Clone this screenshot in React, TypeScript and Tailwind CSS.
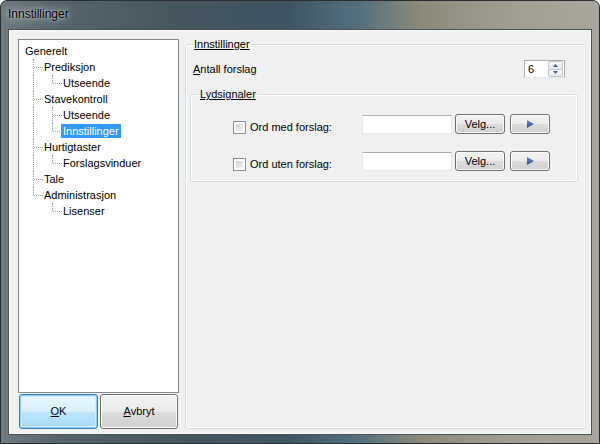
type Row = {
  label: string
  depth: number
  guides: number[]
  elbow?: { x: number; last: boolean }
  selected?: boolean
}

const rows: Row[] = [
  { label: 'Generelt', depth: 0, guides: [] },
  { label: 'Prediksjon', depth: 1, guides: [], elbow: { x: 14, last: false } },
  { label: 'Utseende', depth: 2, guides: [14], elbow: { x: 33, last: true } },
  { label: 'Stavekontroll', depth: 1, guides: [], elbow: { x: 14, last: false } },
  { label: 'Utseende', depth: 2, guides: [14], elbow: { x: 33, last: false } },
  { label: 'Innstillinger', depth: 2, guides: [14], elbow: { x: 33, last: true }, selected: true },
  { label: 'Hurtigtaster', depth: 1, guides: [], elbow: { x: 14, last: false } },
  { label: 'Forslagsvinduer', depth: 2, guides: [14], elbow: { x: 33, last: true } },
  { label: 'Tale', depth: 1, guides: [], elbow: { x: 14, last: false } },
  { label: 'Administrasjon', depth: 1, guides: [], elbow: { x: 14, last: true } },
  { label: 'Lisenser', depth: 2, guides: [], elbow: { x: 33, last: true } },
]

// tree connector lines are decoration on top of each row, so they sit absolute in the row
function TreeRow({ row }: { row: Row }) {
  return (
    <div className="relative flex h-[16px] items-center" style={{ paddingLeft: 4 + 19 * row.depth }}>
      {row.guides.map((x) => (
        <span key={x} className="absolute top-0 h-full w-0 border-l border-dotted border-[#a0a0a0]" style={{ left: x }} />
      ))}
      {row.elbow && (
        <>
          <span
            className="absolute top-0 w-0 border-l border-dotted border-[#a0a0a0]"
            style={{ left: row.elbow.x, height: row.elbow.last ? 8 : 16 }}
          />
          <span className="absolute top-[8px] h-0 w-[9px] border-t border-dotted border-[#a0a0a0]" style={{ left: row.elbow.x + 1 }} />
        </>
      )}
      <span
        className={
          row.selected
            ? 'h-[14px] bg-[#3399ff] px-[2px] leading-[14px] text-white'
            : 'h-[14px] px-[2px] leading-[14px] text-black'
        }
      >
        {row.label}
      </span>
    </div>
  )
}

function Checkbox() {
  return (
    <span className="flex h-[13px] w-[13px] shrink-0 border border-[#8e8f8f] bg-white p-[2px]">
      <span className="flex-1 bg-[linear-gradient(135deg,#cbcfd5,#f7f7f7)]" />
    </span>
  )
}

function Btn({ children, className = '' }: { children: React.ReactNode; className?: string }) {
  return (
    <div
      className={
        'flex h-[20px] items-center justify-center rounded-[3px] border border-[#707070] bg-[linear-gradient(180deg,#f2f2f2_0%,#ebebeb_50%,#dddddd_51%,#cfcfcf_100%)] shadow-[inset_0_0_0_1px_#fcfcfc] ' +
        className
      }
    >
      {children}
    </div>
  )
}

function SoundRow({ label }: { label: string }) {
  return (
    <div className="flex items-center">
      <div className="ml-[42px] mt-[6px] flex w-[129px] items-center gap-[4px]">
        <Checkbox />
        <span className="leading-[14px]">{label}</span>
      </div>
      <div className="h-[19px] w-[90px] border border-[#e3e9ef] border-t-[#abadb3] bg-white" />
      <Btn className="ml-[3px] w-[50px]">Velg...</Btn>
      <Btn className="ml-[5px] w-[40px]">
        <svg width="8" height="8" viewBox="0 0 8 8">
          <defs>
            <linearGradient id="pl" x1="0" y1="0" x2="0" y2="1">
              <stop offset="0" stopColor="#6d8ccc" />
              <stop offset="1" stopColor="#2c4c94" />
            </linearGradient>
          </defs>
          <path d="M1 0 L8 4 L1 8 Z" fill="url(#pl)" />
        </svg>
      </Btn>
    </div>
  )
}

export default function App() {
  return (
    <div className="flex h-[444px] w-[600px] flex-col overflow-hidden rounded-t-[7px] border border-[#2a2e31] bg-[linear-gradient(90deg,#6f7b81_0%,#55636c_10%,#46565f_30%,#3f5563_48%,#54707f_60%,#8a897a_70%,#a09e90_85%,#a9a79c_100%)] font-['Liberation_Sans',Arial,sans-serif] text-[11px] text-black">
      <div className="flex h-[28px] shrink-0 items-center pl-[7px] pb-[2px] text-[12px] [text-shadow:0_0_8px_rgba(255,255,255,0.9),0_0_3px_rgba(255,255,255,0.6)]">
        Innstillinger
      </div>
      <div className="mx-[7px] mb-[8px] flex flex-1 border border-[#4b5052] bg-[#f0f0f0] pl-[9px] pr-[5px] pt-[7px] pb-[5px] shadow-[inset_0_0_0_1px_#fbfbfb]">
        <div className="flex w-[161px] shrink-0 flex-col pt-[2px]">
          <div className="flex-1 border border-[#828790] bg-white pt-[3px]">
            {rows.map((r, i) => (
              <TreeRow key={i} row={r} />
            ))}
          </div>
          <div className="mt-[1px] flex h-[35px] gap-[2px] pl-px pr-px">
            <div className="flex w-[79px] items-center justify-center rounded-[3px] border border-[#3c7fb1] bg-[linear-gradient(180deg,#eaf6fd_0%,#d9f0fc_50%,#bee6fd_51%,#a7d9f5_100%)] shadow-[inset_0_0_0_1px_#8ad0f5,inset_0_0_0_2px_#d2eefc]">
              <span>
                <span className="underline">O</span>K
              </span>
            </div>
            <div className="flex w-[78px] items-center justify-center rounded-[3px] border border-[#707070] bg-[linear-gradient(180deg,#f2f2f2_0%,#ebebeb_50%,#dddddd_51%,#cfcfcf_100%)] shadow-[inset_0_0_0_1px_#fcfcfc]">
              <span>
                <span className="underline">A</span>vbryt
              </span>
            </div>
          </div>
        </div>
        <fieldset className="ml-[6px] flex-1 rounded-[3px] border border-[#d5dfe5] px-0 pb-0 shadow-[inset_0_0_0_1px_#ffffff]">
          <legend className="ml-[7px] px-[1px] leading-[14px] underline">Innstillinger</legend>
          <div className="ml-[7px] mr-[20px] mt-[9px] flex items-center justify-between">
            <span className="leading-[14px]">
              <span className="underline">A</span>ntall forslag
            </span>
            <div className="flex h-[18px] w-[41px] items-center border border-[#abadb3] border-b-[#e3e9ef] bg-white pl-[3px]">
              <span className="flex-1">6</span>
              <div className="mr-px flex h-[16px] w-[15px] flex-col">
                <div className="flex flex-1 items-center justify-center rounded-t-[2px] border border-[#c4c6ca] bg-[linear-gradient(180deg,#f7f8fa,#e4e7ec)]">
                  <svg width="5" height="3" viewBox="0 0 5 3">
                    <path d="M0 3 L2.5 0 L5 3 Z" fill="#4d6185" />
                  </svg>
                </div>
                <div className="flex flex-1 items-center justify-center rounded-b-[2px] border border-t-0 border-[#c4c6ca] bg-[linear-gradient(180deg,#f7f8fa,#e4e7ec)]">
                  <svg width="5" height="3" viewBox="0 0 5 3">
                    <path d="M0 0 L2.5 3 L5 0 Z" fill="#4d6185" />
                  </svg>
                </div>
              </div>
            </div>
          </div>
          <fieldset className="ml-[4px] mr-[7px] mt-[9px] flex flex-col gap-[17px] rounded-[3px] border border-[#d5dfe5] px-0 pb-[10px] pt-[13px] shadow-[inset_0_0_0_1px_#ffffff]">
            <legend className="ml-[7px] px-[2px] leading-[14px] underline">Lydsignaler</legend>
            <SoundRow label="Ord med forslag:" />
            <SoundRow label="Ord uten forslag:" />
          </fieldset>
        </fieldset>
      </div>
    </div>
  )
}
